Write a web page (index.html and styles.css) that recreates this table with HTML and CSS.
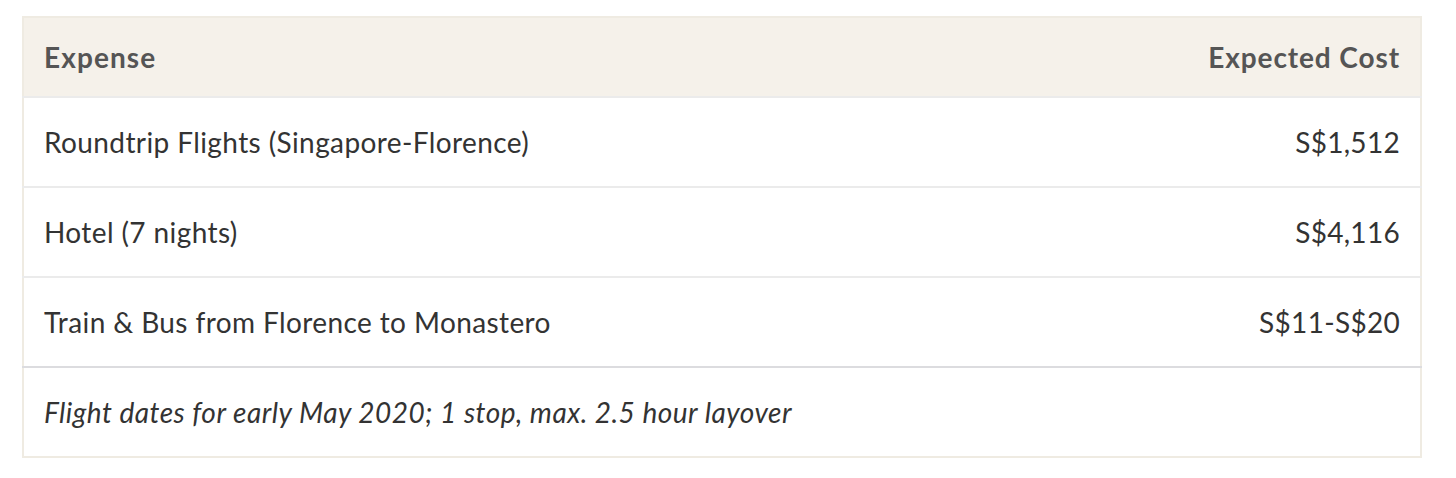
FILE: index.html
```html
<!DOCTYPE html>
<html lang="en">
<head>
<meta charset="utf-8">
<title>Expenses</title>
<link rel="stylesheet" href="styles.css">
</head>
<body>
<div class="wrap">
  <table class="costs">
    <thead>
      <tr class="head-row">
        <th class="col-left">Expense</th>
        <th class="col-right">Expected Cost</th>
      </tr>
    </thead>
    <tbody>
      <tr class="row">
        <td class="col-left">Roundtrip Flights (Singapore-Florence)</td>
        <td class="col-right">S$1,512</td>
      </tr>
      <tr class="row">
        <td class="col-left">Hotel (7 nights)</td>
        <td class="col-right">S$4,116</td>
      </tr>
      <tr class="row">
        <td class="col-left">Train &amp; Bus from Florence to Monastero</td>
        <td class="col-right">S$11-S$20</td>
      </tr>
      <tr class="row note-row">
        <td class="note" colspan="2">Flight dates for early May 2020; 1 stop, max. 2.5 hour layover</td>
      </tr>
    </tbody>
  </table>
</div>
</body>
</html>
```

FILE: styles.css
```css
html, body {
  margin: 0;
  padding: 0;
  background: #ffffff;
}

.wrap {
  padding: 16px 34px 0 22px;
}

.costs {
  width: 1400px;
  border-collapse: collapse;
  border: 2px solid #efebe2;
  font-family: Lato, "Noto Sans", sans-serif;
  font-size: 28px;
  letter-spacing: 0.4px;
  color: #333333;
}

.head-row {
  background: #f5f1ea;
  height: 80px;
}

.head-row th {
  font-weight: 700;
  color: #555555;
  padding: 0 20px;
  letter-spacing: 1.1px;
}

.head-row .col-right {
  letter-spacing: 0.9px;
}

.row td {
  height: 88px;
  padding: 0 20px;
  border-top: 2px solid #ebebeb;
  line-height: 32px;
}

.row .col-right {
  letter-spacing: 0.3px;
}

.note-row td {
  border-top-color: #dcdcdf;
}

.col-left {
  text-align: left;
}

.col-right {
  text-align: right;
}

.note {
  font-style: italic;
  text-align: left;
  letter-spacing: 0.5px;
}
```
